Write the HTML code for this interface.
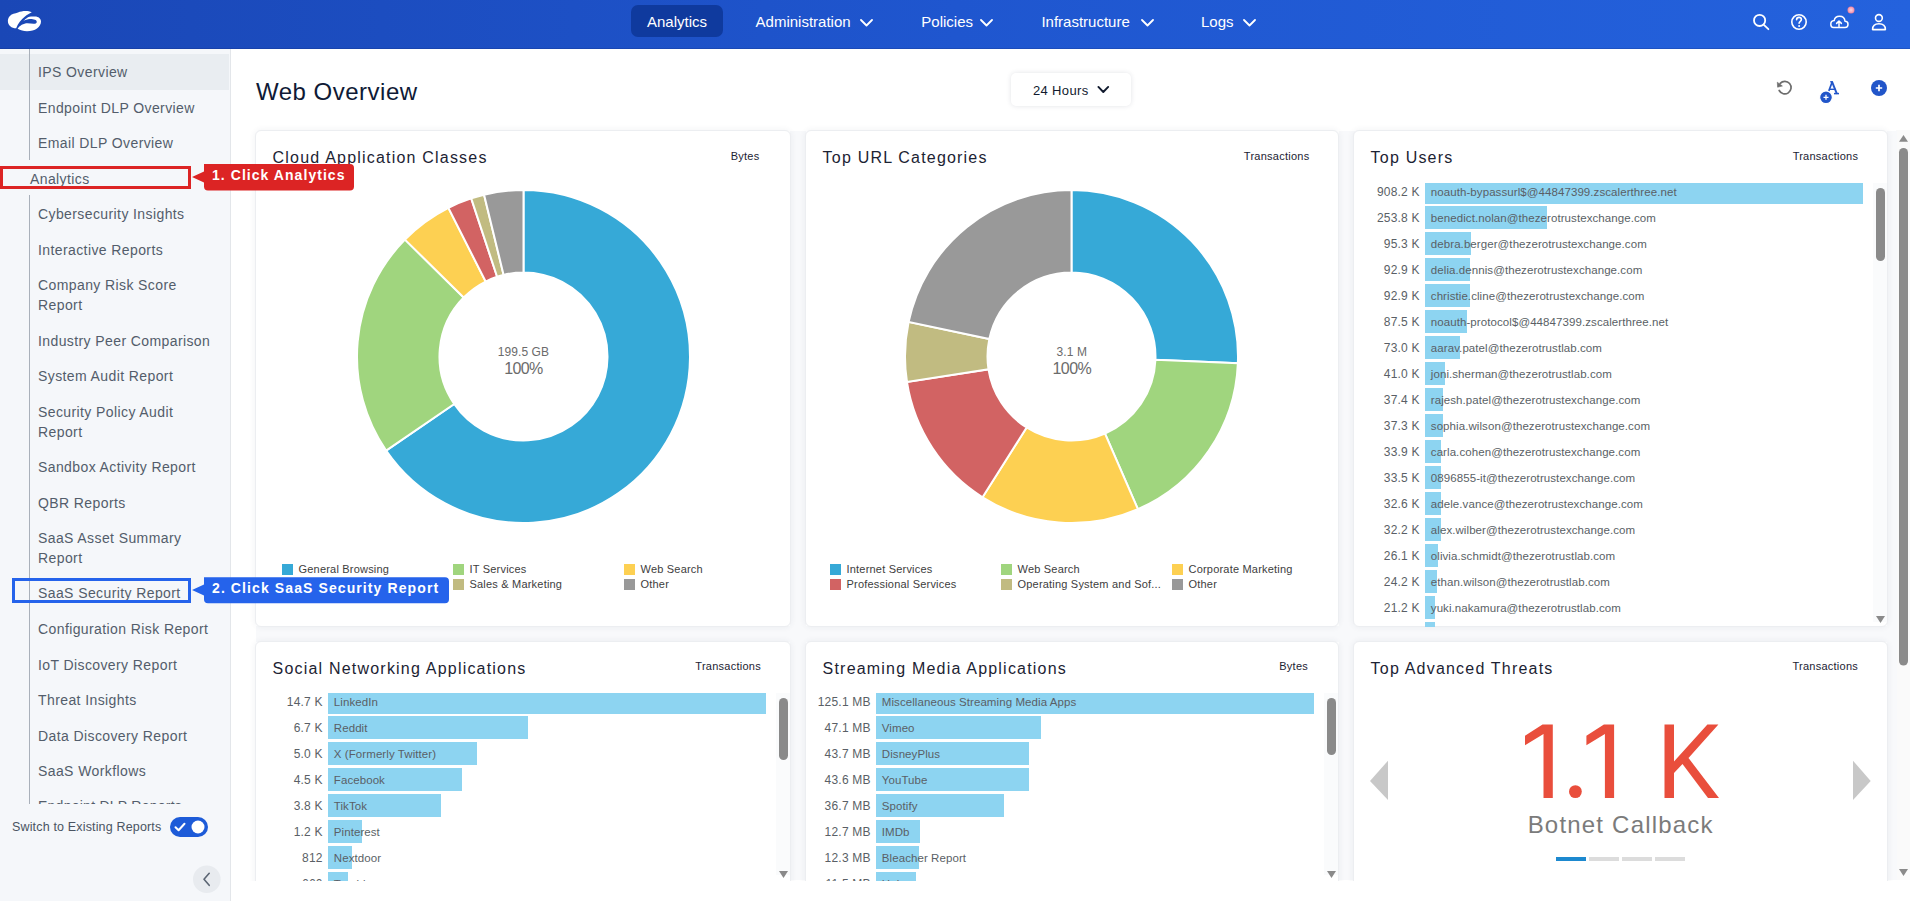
<!DOCTYPE html>
<html><head><meta charset="utf-8"><style>
html,body{margin:0;padding:0;width:1910px;height:901px;overflow:hidden;background:#fff;font-family:"Liberation Sans", sans-serif;}
.t{position:absolute;white-space:nowrap;font-family:"Liberation Sans", sans-serif;}
</style></head><body>
<div style="position:absolute;left:0px;top:0px;width:1910px;height:49px;background:linear-gradient(to right,#1a47b6,#1f56cf 50%,#2462dd);"></div>
<div style="position:absolute;left:0px;top:48px;width:1910px;height:1px;background:rgba(10,30,90,0.18);"></div>
<svg style="position:absolute;left:0px;top:0px" width="50" height="45" viewBox="0 0 50 45">
<path d="M31.8 12.3 C28 10.5 22 10.8 18 12.6 C16.5 13.1 15 13.5 13.5 13.8 C10.2 14.8 7.9 17.8 7.9 21.2 C7.9 25.2 11.5 28.3 16.2 28.3 C18 23.5 21 19.5 25 16.5 C27 15 29.3 13.4 31.8 12.3 Z" fill="#fff"/>
<path d="M17.6 28.8 C20.5 30.5 23.5 31.2 27 31.2 C31 31.2 34.5 30.5 37 28.5 C39.5 26.8 41 24.2 41 21.6 C41 18.5 38.5 16.4 35 16.4 L31 16.4 C28.8 16.6 27 17.6 25.5 19 C24.5 19.8 23.8 20.5 23.3 21.2 C25 20 27.5 19.2 30 19.1 C33.5 19 36.8 20 36.8 21.9 C36.8 23.2 35.2 23.7 33.5 23.7 C31.5 23.7 29.5 23.2 27.5 23.2 C23.5 23.2 19.5 25.5 17.6 28.8 Z" fill="#fff"/>
</svg>
<div style="position:absolute;left:631px;top:5px;width:92px;height:32px;background:#0f3a9e;border-radius:7px;"></div>
<div class="t" style="left:647.00px;top:14.30px;font-size:15px;line-height:15px;color:#fff;letter-spacing:0px;font-weight:400;">Analytics</div>
<div class="t" style="left:755.60px;top:14.30px;font-size:15px;line-height:15px;color:#fff;letter-spacing:0px;font-weight:400;">Administration</div>
<svg style="position:absolute;left:860px;top:19px" width="13" height="8" viewBox="0 0 13 8"><path d="M1 1 L6.5 6.5 L12 1" stroke="#fff" stroke-width="1.8" fill="none" stroke-linecap="round" stroke-linejoin="round"/></svg>
<div class="t" style="left:921.30px;top:14.30px;font-size:15px;line-height:15px;color:#fff;letter-spacing:0px;font-weight:400;">Policies</div>
<svg style="position:absolute;left:980px;top:19px" width="13" height="8" viewBox="0 0 13 8"><path d="M1 1 L6.5 6.5 L12 1" stroke="#fff" stroke-width="1.8" fill="none" stroke-linecap="round" stroke-linejoin="round"/></svg>
<div class="t" style="left:1041.40px;top:14.30px;font-size:15px;line-height:15px;color:#fff;letter-spacing:0px;font-weight:400;">Infrastructure</div>
<svg style="position:absolute;left:1141px;top:19px" width="13" height="8" viewBox="0 0 13 8"><path d="M1 1 L6.5 6.5 L12 1" stroke="#fff" stroke-width="1.8" fill="none" stroke-linecap="round" stroke-linejoin="round"/></svg>
<div class="t" style="left:1201.00px;top:14.30px;font-size:15px;line-height:15px;color:#fff;letter-spacing:0px;font-weight:400;">Logs</div>
<svg style="position:absolute;left:1243px;top:19px" width="13" height="8" viewBox="0 0 13 8"><path d="M1 1 L6.5 6.5 L12 1" stroke="#fff" stroke-width="1.8" fill="none" stroke-linecap="round" stroke-linejoin="round"/></svg>
<svg style="position:absolute;left:1745px;top:5px" width="160" height="34" viewBox="1745 5 160 34">
<circle cx="1759.6" cy="20.4" r="5.6" stroke="#fff" stroke-width="1.8" fill="none"/>
<path d="M1763.6 24.6 L1768.4 29.2" stroke="#fff" stroke-width="1.8" stroke-linecap="round"/>
<circle cx="1799" cy="22" r="7.2" stroke="#fff" stroke-width="1.6" fill="none"/>
<path d="M1796.6 19.8 C1796.6 18.2 1797.7 17.4 1799 17.4 C1800.4 17.4 1801.4 18.3 1801.4 19.6 C1801.4 21.2 1799.1 21.4 1799.1 23.2" stroke="#fff" stroke-width="1.6" fill="none" stroke-linecap="round"/>
<circle cx="1799.1" cy="25.9" r="1" fill="#fff"/>
<path d="M1833.5 27.5 L1845 27.5 C1847 27.5 1848 26 1848 24.2 C1848 22.4 1846.6 21.2 1845 21.2 C1844.8 18.2 1842.5 16.2 1839.5 16.2 C1836.8 16.2 1834.6 18 1834.2 20.6 C1832 20.8 1830.8 22.4 1830.8 24.2 C1830.8 26 1832 27.5 1833.5 27.5 Z" stroke="#fff" stroke-width="1.5" fill="none" stroke-linejoin="round"/>
<path d="M1839 26.5 L1839 21.2 M1836.6 23.4 L1839 21 L1841.4 23.4" stroke="#fff" stroke-width="1.5" fill="none" stroke-linecap="round" stroke-linejoin="round"/>
<defs><radialGradient id="rd"><stop offset="0" stop-color="#fcd3df"/><stop offset="0.6" stop-color="#f6aac0"/><stop offset="1" stop-color="#ee7f9d"/></radialGradient></defs><circle cx="1851" cy="10" r="3.5" fill="url(#rd)"/>
<circle cx="1878.9" cy="18" r="3.4" stroke="#fff" stroke-width="1.6" fill="none"/>
<path d="M1872.6 29.6 C1872.6 26 1875 23.8 1878.9 23.8 C1882.8 23.8 1885.4 26 1885.4 29.6 Z" stroke="#fff" stroke-width="1.6" fill="none" stroke-linejoin="round"/>
</svg>
<div style="position:absolute;left:0px;top:49px;width:230px;height:852px;background:#f5f7fa;"></div>
<div style="position:absolute;left:230px;top:49px;width:1px;height:852px;background:#e3e6ea;"></div>
<div style="position:absolute;left:0px;top:54px;width:229px;height:36px;background:#e9edf1;"></div>
<div style="position:absolute;left:29px;top:49px;width:1px;height:111px;background:#a9b0ba;"></div>
<div style="position:absolute;left:29px;top:195px;width:1px;height:609px;background:#a9b0ba;"></div>
<div class="t" style="left:38.00px;top:65.35px;font-size:14px;line-height:14px;color:#535d6b;letter-spacing:0.4px;font-weight:400;">IPS Overview</div>
<div class="t" style="left:38.00px;top:100.85px;font-size:14px;line-height:14px;color:#535d6b;letter-spacing:0.4px;font-weight:400;">Endpoint DLP Overview</div>
<div class="t" style="left:38.00px;top:136.35px;font-size:14px;line-height:14px;color:#535d6b;letter-spacing:0.4px;font-weight:400;">Email DLP Overview</div>
<div class="t" style="left:38.00px;top:207.35px;font-size:14px;line-height:14px;color:#535d6b;letter-spacing:0.4px;font-weight:400;">Cybersecurity Insights</div>
<div class="t" style="left:38.00px;top:242.85px;font-size:14px;line-height:14px;color:#535d6b;letter-spacing:0.4px;font-weight:400;">Interactive Reports</div>
<div class="t" style="left:38.00px;top:278.35px;font-size:14px;line-height:14px;color:#535d6b;letter-spacing:0.4px;font-weight:400;">Company Risk Score</div>
<div class="t" style="left:38.00px;top:298.35px;font-size:14px;line-height:14px;color:#535d6b;letter-spacing:0.4px;font-weight:400;">Report</div>
<div class="t" style="left:38.00px;top:333.85px;font-size:14px;line-height:14px;color:#535d6b;letter-spacing:0.4px;font-weight:400;">Industry Peer Comparison</div>
<div class="t" style="left:38.00px;top:369.35px;font-size:14px;line-height:14px;color:#535d6b;letter-spacing:0.4px;font-weight:400;">System Audit Report</div>
<div class="t" style="left:38.00px;top:404.85px;font-size:14px;line-height:14px;color:#535d6b;letter-spacing:0.4px;font-weight:400;">Security Policy Audit</div>
<div class="t" style="left:38.00px;top:424.85px;font-size:14px;line-height:14px;color:#535d6b;letter-spacing:0.4px;font-weight:400;">Report</div>
<div class="t" style="left:38.00px;top:460.35px;font-size:14px;line-height:14px;color:#535d6b;letter-spacing:0.4px;font-weight:400;">Sandbox Activity Report</div>
<div class="t" style="left:38.00px;top:495.85px;font-size:14px;line-height:14px;color:#535d6b;letter-spacing:0.4px;font-weight:400;">QBR Reports</div>
<div class="t" style="left:38.00px;top:531.35px;font-size:14px;line-height:14px;color:#535d6b;letter-spacing:0.4px;font-weight:400;">SaaS Asset Summary</div>
<div class="t" style="left:38.00px;top:551.35px;font-size:14px;line-height:14px;color:#535d6b;letter-spacing:0.4px;font-weight:400;">Report</div>
<div class="t" style="left:38.00px;top:585.95px;font-size:14px;line-height:14px;color:#535d6b;letter-spacing:0.4px;font-weight:400;">SaaS Security Report</div>
<div class="t" style="left:38.00px;top:622.35px;font-size:14px;line-height:14px;color:#535d6b;letter-spacing:0.4px;font-weight:400;">Configuration Risk Report</div>
<div class="t" style="left:38.00px;top:657.85px;font-size:14px;line-height:14px;color:#535d6b;letter-spacing:0.4px;font-weight:400;">IoT Discovery Report</div>
<div class="t" style="left:38.00px;top:693.35px;font-size:14px;line-height:14px;color:#535d6b;letter-spacing:0.4px;font-weight:400;">Threat Insights</div>
<div class="t" style="left:38.00px;top:728.85px;font-size:14px;line-height:14px;color:#535d6b;letter-spacing:0.4px;font-weight:400;">Data Discovery Report</div>
<div class="t" style="left:38.00px;top:764.35px;font-size:14px;line-height:14px;color:#535d6b;letter-spacing:0.4px;font-weight:400;">SaaS Workflows</div>
<div class="t" style="left:30.00px;top:171.75px;font-size:14px;line-height:14px;color:#535d6b;letter-spacing:0.4px;font-weight:400;">Analytics</div>
<div style="position:absolute;left:0;top:780px;width:229px;height:24px;overflow:hidden">
<div class="t" style="left:38px;top:19.25px;font-size:14px;line-height:14px;color:#535d6b;letter-spacing:0.25px">Endpoint DLP Reports</div>
</div>
<div class="t" style="left:12.00px;top:820.62px;font-size:12.5px;line-height:12.5px;color:#4a5462;letter-spacing:0.16px;font-weight:400;">Switch to Existing Reports</div>
<div style="position:absolute;left:170px;top:817px;width:38px;height:20px;background:#1d5bd8;border-radius:10px;"></div>
<svg style="position:absolute;left:170px;top:817px" width="38" height="20" viewBox="0 0 38 20"><circle cx="28" cy="10" r="6.5" fill="#fff"/><path d="M5.5 10.2 L8.6 13.2 L14.5 6.8" stroke="#fff" stroke-width="2" fill="none" stroke-linecap="round" stroke-linejoin="round"/></svg>
<svg style="position:absolute;left:192px;top:865px" width="30" height="30" viewBox="0 0 30 30"><circle cx="14.8" cy="14.3" r="13.8" fill="#e8ebef"/><path d="M17.2 8.3 L12 14.3 L17.2 20.3" stroke="#5b6573" stroke-width="1.6" fill="none" stroke-linecap="round" stroke-linejoin="round"/></svg>
<div class="t" style="left:256.00px;top:80.28px;font-size:24px;line-height:24px;color:#0f1a36;letter-spacing:0.5px;font-weight:400;">Web Overview</div>
<div style="position:absolute;left:1010.6px;top:73.4px;width:120.6px;height:32.6px;background:#fff;border-radius:5px;box-shadow:0 0 5px rgba(30,40,70,0.13);"></div>
<div class="t" style="left:1033.00px;top:84.00px;font-size:13px;line-height:13px;color:#111a2e;letter-spacing:0.35px;font-weight:400;">24 Hours</div>
<svg style="position:absolute;left:1097px;top:85px" width="13" height="9" viewBox="0 0 13 9"><path d="M1.4 1.9 L6.3 7 L11.2 1.9" stroke="#111a2e" stroke-width="1.9" fill="none" stroke-linecap="round" stroke-linejoin="round"/></svg>
<svg style="position:absolute;left:1770px;top:74px" width="125" height="34" viewBox="1770 74 125 34">
<path d="M1780.2 83.3 A6.3 6.3 0 1 1 1779.2 90.5" stroke="#6d6d6d" stroke-width="1.7" fill="none" stroke-linecap="round"/>
<path d="M1777.3 82.2 L1777.6 87.2 L1782.4 86 Z" fill="#6d6d6d" stroke="#6d6d6d" stroke-width="0.6" stroke-linejoin="round"/>
<g stroke="#2155c9" fill="none" stroke-linecap="butt">
<path d="M1832.3 81.6 L1827.6 94.2" stroke-width="1.7"/>
<path d="M1832 81.6 L1836.9 93.8" stroke-width="1.9"/>
<path d="M1829.4 89.3 L1835.3 89.3" stroke-width="1.4"/>
<path d="M1834 93.6 L1839 93.6" stroke-width="1.5"/>
<path d="M1830.2 81.8 L1832.8 81.8" stroke-width="1.4"/>
</g>
<circle cx="1826" cy="97.3" r="6.4" fill="#2155c9" stroke="#fff" stroke-width="1.2"/>
<path d="M1826 94.8 L1826 99.8 M1823.5 97.3 L1828.5 97.3" stroke="#fff" stroke-width="1.3"/>
<circle cx="1879" cy="88" r="8" fill="#2155c9"/>
<path d="M1879 84.8 L1879 91.2 M1875.8 88 L1882.2 88" stroke="#fff" stroke-width="1.7"/>
</svg>
<div style="position:absolute;left:1896px;top:130px;width:14px;height:750px;background:#fafafa;"></div>
<svg style="position:absolute;left:1895px;top:130px" width="15" height="750" viewBox="1895 130 15 750"><path d="M1899 141.8 L1903.5 135 L1908 141.8 Z" fill="#8a8a8a"/><rect x="1899" y="148" width="9" height="517.5" rx="4.5" fill="#8a8a8a"/><path d="M1899 869 L1903.5 876 L1908 869 Z" fill="#8a8a8a"/></svg>
<div style="position:absolute;left:790px;top:131px;width:16px;height:749px;background:#f8f9fb;"></div>
<div style="position:absolute;left:1338.5px;top:131px;width:16px;height:749px;background:#f8f9fb;"></div>
<div style="position:absolute;left:1887px;top:131px;width:10px;height:749px;background:#f8f9fb;"></div>
<div style="position:absolute;left:256px;top:626px;width:1640px;height:16px;background:#f8f9fb;"></div>
<div style="position:absolute;left:255.3px;top:130.4px;width:536px;height:496.3px;background:#fff;border:1px solid #eceef1;border-radius:6px;box-sizing:border-box;box-shadow:0 0 6px rgba(40,50,80,0.07)"></div>
<div style="position:absolute;left:804.9px;top:130.4px;width:534.5px;height:496.3px;background:#fff;border:1px solid #eceef1;border-radius:6px;box-sizing:border-box;box-shadow:0 0 6px rgba(40,50,80,0.07)"></div>
<div style="position:absolute;left:1352.9px;top:130.4px;width:535.2px;height:496.3px;background:#fff;border:1px solid #eceef1;border-radius:6px;box-sizing:border-box;box-shadow:0 0 6px rgba(40,50,80,0.07)"></div>
<div style="position:absolute;left:255.3px;top:641px;width:536px;height:300px;background:#fff;border:1px solid #eceef1;border-radius:6px;box-sizing:border-box;box-shadow:0 0 6px rgba(40,50,80,0.07)"></div>
<div style="position:absolute;left:804.9px;top:641px;width:534.5px;height:300px;background:#fff;border:1px solid #eceef1;border-radius:6px;box-sizing:border-box;box-shadow:0 0 6px rgba(40,50,80,0.07)"></div>
<div style="position:absolute;left:1352.9px;top:641px;width:535.2px;height:300px;background:#fff;border:1px solid #eceef1;border-radius:6px;box-sizing:border-box;box-shadow:0 0 6px rgba(40,50,80,0.07)"></div>
<div class="t" style="left:272.60px;top:150.26px;font-size:16px;line-height:16px;color:#1c2333;letter-spacing:1.2px;font-weight:400;">Cloud Application Classes</div>
<div class="t" style="right:1150.60px;top:150.59px;font-size:11px;line-height:11px;color:#1c2333;letter-spacing:0.25px;font-weight:400;">Bytes</div>
<div class="t" style="left:822.60px;top:150.26px;font-size:16px;line-height:16px;color:#1c2333;letter-spacing:1.2px;font-weight:400;">Top URL Categories</div>
<div class="t" style="right:600.60px;top:150.59px;font-size:11px;line-height:11px;color:#1c2333;letter-spacing:0.25px;font-weight:400;">Transactions</div>
<div class="t" style="left:1370.60px;top:150.26px;font-size:16px;line-height:16px;color:#1c2333;letter-spacing:1.2px;font-weight:400;">Top Users</div>
<div class="t" style="right:51.80px;top:150.59px;font-size:11px;line-height:11px;color:#1c2333;letter-spacing:0.25px;font-weight:400;">Transactions</div>
<div class="t" style="left:272.60px;top:660.56px;font-size:16px;line-height:16px;color:#1c2333;letter-spacing:1.2px;font-weight:400;">Social Networking Applications</div>
<div class="t" style="right:1149.10px;top:660.89px;font-size:11px;line-height:11px;color:#1c2333;letter-spacing:0.25px;font-weight:400;">Transactions</div>
<div class="t" style="left:822.60px;top:660.56px;font-size:16px;line-height:16px;color:#1c2333;letter-spacing:1.2px;font-weight:400;">Streaming Media Applications</div>
<div class="t" style="right:602.00px;top:660.89px;font-size:11px;line-height:11px;color:#1c2333;letter-spacing:0.25px;font-weight:400;">Bytes</div>
<div class="t" style="left:1370.60px;top:660.56px;font-size:16px;line-height:16px;color:#1c2333;letter-spacing:1.2px;font-weight:400;">Top Advanced Threats</div>
<div class="t" style="right:52.00px;top:660.89px;font-size:11px;line-height:11px;color:#1c2333;letter-spacing:0.25px;font-weight:400;">Transactions</div>
<svg style="position:absolute;left:354.9px;top:187.89999999999998px" width="337.0" height="337.0" viewBox="354.9 187.89999999999998 337.0 337.0"><path d="M523.40 189.90 A166.5 166.5 0 1 1 386.02 450.47 L454.09 403.86 A84 84 0 1 0 523.40 272.40 Z" fill="#36a9d7" stroke="#fff" stroke-width="2" stroke-linejoin="miter"/><path d="M386.02 450.47 A166.5 166.5 0 0 1 404.85 239.49 L463.59 297.42 A84 84 0 0 0 454.09 403.86 Z" fill="#a0d57e" stroke="#fff" stroke-width="2" stroke-linejoin="miter"/><path d="M404.85 239.49 A166.5 166.5 0 0 1 448.33 207.78 L485.53 281.42 A84 84 0 0 0 463.59 297.42 Z" fill="#fdd052" stroke="#fff" stroke-width="2" stroke-linejoin="miter"/><path d="M448.33 207.78 A166.5 166.5 0 0 1 471.12 198.32 L497.02 276.65 A84 84 0 0 0 485.53 281.42 Z" fill="#d26363" stroke="#fff" stroke-width="2" stroke-linejoin="miter"/><path d="M471.12 198.32 A166.5 166.5 0 0 1 483.97 194.64 L503.51 274.79 A84 84 0 0 0 497.02 276.65 Z" fill="#c1bb81" stroke="#fff" stroke-width="2" stroke-linejoin="miter"/><path d="M483.97 194.64 A166.5 166.5 0 0 1 523.40 189.90 L523.40 272.40 A84 84 0 0 0 503.51 274.79 Z" fill="#999999" stroke="#fff" stroke-width="2" stroke-linejoin="miter"/></svg>
<svg style="position:absolute;left:903.3px;top:187.89999999999998px" width="337.0" height="337.0" viewBox="903.3 187.89999999999998 337.0 337.0"><path d="M1071.80 189.90 A166.5 166.5 0 0 1 1238.17 363.08 L1155.73 359.77 A84 84 0 0 0 1071.80 272.40 Z" fill="#36a9d7" stroke="#fff" stroke-width="2" stroke-linejoin="miter"/><path d="M1238.17 363.08 A166.5 166.5 0 0 1 1138.19 509.09 L1105.29 433.43 A84 84 0 0 0 1155.73 359.77 Z" fill="#a0d57e" stroke="#fff" stroke-width="2" stroke-linejoin="miter"/><path d="M1138.19 509.09 A166.5 166.5 0 0 1 982.83 497.14 L1026.91 427.40 A84 84 0 0 0 1105.29 433.43 Z" fill="#fdd052" stroke="#fff" stroke-width="2" stroke-linejoin="miter"/><path d="M982.83 497.14 A166.5 166.5 0 0 1 907.26 381.87 L988.79 369.25 A84 84 0 0 0 1026.91 427.40 Z" fill="#d26363" stroke="#fff" stroke-width="2" stroke-linejoin="miter"/><path d="M907.26 381.87 A166.5 166.5 0 0 1 908.94 321.78 L989.64 338.94 A84 84 0 0 0 988.79 369.25 Z" fill="#c1bb81" stroke="#fff" stroke-width="2" stroke-linejoin="miter"/><path d="M908.94 321.78 A166.5 166.5 0 0 1 1071.80 189.90 L1071.80 272.40 A84 84 0 0 0 989.64 338.94 Z" fill="#999999" stroke="#fff" stroke-width="2" stroke-linejoin="miter"/></svg>
<div class="t" style="left:23.40px;width:1000px;text-align:center;top:345.64px;font-size:12px;line-height:12px;color:#6b6b6b;letter-spacing:0.1px;font-weight:400;">199.5 GB</div>
<div class="t" style="left:23.40px;width:1000px;text-align:center;top:361.06px;font-size:16px;line-height:16px;color:#6b6b6b;letter-spacing:-0.6px;font-weight:400;">100%</div>
<div class="t" style="left:571.80px;width:1000px;text-align:center;top:345.64px;font-size:12px;line-height:12px;color:#6b6b6b;letter-spacing:0.1px;font-weight:400;">3.1 M</div>
<div class="t" style="left:571.80px;width:1000px;text-align:center;top:361.06px;font-size:16px;line-height:16px;color:#6b6b6b;letter-spacing:-0.6px;font-weight:400;">100%</div>
<div style="position:absolute;left:282px;top:564px;width:11px;height:10.5px;background:#36a9d7;"></div>
<div class="t" style="left:298.50px;top:563.69px;font-size:11px;line-height:11px;color:#3d3d3d;letter-spacing:0.2px;font-weight:400;">General Browsing</div>
<div style="position:absolute;left:453px;top:564px;width:11px;height:10.5px;background:#a0d57e;"></div>
<div class="t" style="left:469.50px;top:563.69px;font-size:11px;line-height:11px;color:#3d3d3d;letter-spacing:0.2px;font-weight:400;">IT Services</div>
<div style="position:absolute;left:624px;top:564px;width:11px;height:10.5px;background:#fdd052;"></div>
<div class="t" style="left:640.50px;top:563.69px;font-size:11px;line-height:11px;color:#3d3d3d;letter-spacing:0.2px;font-weight:400;">Web Search</div>
<div style="position:absolute;left:453px;top:579px;width:11px;height:10.5px;background:#c1bb81;"></div>
<div class="t" style="left:469.50px;top:578.69px;font-size:11px;line-height:11px;color:#3d3d3d;letter-spacing:0.2px;font-weight:400;">Sales &amp; Marketing</div>
<div style="position:absolute;left:624px;top:579px;width:11px;height:10.5px;background:#999999;"></div>
<div class="t" style="left:640.50px;top:578.69px;font-size:11px;line-height:11px;color:#3d3d3d;letter-spacing:0.2px;font-weight:400;">Other</div>
<div style="position:absolute;left:830px;top:564px;width:11px;height:10.5px;background:#36a9d7;"></div>
<div class="t" style="left:846.50px;top:563.69px;font-size:11px;line-height:11px;color:#3d3d3d;letter-spacing:0.2px;font-weight:400;">Internet Services</div>
<div style="position:absolute;left:1001px;top:564px;width:11px;height:10.5px;background:#a0d57e;"></div>
<div class="t" style="left:1017.50px;top:563.69px;font-size:11px;line-height:11px;color:#3d3d3d;letter-spacing:0.2px;font-weight:400;">Web Search</div>
<div style="position:absolute;left:1172px;top:564px;width:11px;height:10.5px;background:#fdd052;"></div>
<div class="t" style="left:1188.50px;top:563.69px;font-size:11px;line-height:11px;color:#3d3d3d;letter-spacing:0.2px;font-weight:400;">Corporate Marketing</div>
<div style="position:absolute;left:830px;top:579px;width:11px;height:10.5px;background:#d26363;"></div>
<div class="t" style="left:846.50px;top:578.69px;font-size:11px;line-height:11px;color:#3d3d3d;letter-spacing:0.2px;font-weight:400;">Professional Services</div>
<div style="position:absolute;left:1001px;top:579px;width:11px;height:10.5px;background:#c1bb81;"></div>
<div class="t" style="left:1017.50px;top:578.69px;font-size:11px;line-height:11px;color:#3d3d3d;letter-spacing:0.2px;font-weight:400;">Operating System and Sof...</div>
<div style="position:absolute;left:1172px;top:579px;width:11px;height:10.5px;background:#999999;"></div>
<div class="t" style="left:1188.50px;top:578.69px;font-size:11px;line-height:11px;color:#3d3d3d;letter-spacing:0.2px;font-weight:400;">Other</div>
<div style="position:absolute;left:1354px;top:183.3px;width:533px;height:443.7px;overflow:hidden">
<div style="position:absolute;left:71px;top:-2.80px;width:438.00px;height:23px;background:#8dd4f1"></div>
<div class="t" style="right:467.30px;top:2.94px;font-size:12px;line-height:12px;color:#5a5f66;letter-spacing:0.2px">908.2 K</div>
<div class="t" style="left:76.80px;top:3.57px;font-size:11.5px;line-height:11.5px;color:#5a5f66;letter-spacing:0.08px">noauth-bypassurl$@44847399.zscalerthree.net</div>
<div style="position:absolute;left:71px;top:23.20px;width:122.40px;height:23px;background:#8dd4f1"></div>
<div class="t" style="right:467.30px;top:28.94px;font-size:12px;line-height:12px;color:#5a5f66;letter-spacing:0.2px">253.8 K</div>
<div class="t" style="left:76.80px;top:29.57px;font-size:11.5px;line-height:11.5px;color:#5a5f66;letter-spacing:0.08px">benedict.nolan@thezerotrustexchange.com</div>
<div style="position:absolute;left:71px;top:49.20px;width:45.96px;height:23px;background:#8dd4f1"></div>
<div class="t" style="right:467.30px;top:54.94px;font-size:12px;line-height:12px;color:#5a5f66;letter-spacing:0.2px">95.3 K</div>
<div class="t" style="left:76.80px;top:55.57px;font-size:11.5px;line-height:11.5px;color:#5a5f66;letter-spacing:0.08px">debra.berger@thezerotrustexchange.com</div>
<div style="position:absolute;left:71px;top:75.20px;width:44.80px;height:23px;background:#8dd4f1"></div>
<div class="t" style="right:467.30px;top:80.94px;font-size:12px;line-height:12px;color:#5a5f66;letter-spacing:0.2px">92.9 K</div>
<div class="t" style="left:76.80px;top:81.57px;font-size:11.5px;line-height:11.5px;color:#5a5f66;letter-spacing:0.08px">delia.dennis@thezerotrustexchange.com</div>
<div style="position:absolute;left:71px;top:101.20px;width:44.80px;height:23px;background:#8dd4f1"></div>
<div class="t" style="right:467.30px;top:106.94px;font-size:12px;line-height:12px;color:#5a5f66;letter-spacing:0.2px">92.9 K</div>
<div class="t" style="left:76.80px;top:107.57px;font-size:11.5px;line-height:11.5px;color:#5a5f66;letter-spacing:0.08px">christie.cline@thezerotrustexchange.com</div>
<div style="position:absolute;left:71px;top:127.20px;width:42.20px;height:23px;background:#8dd4f1"></div>
<div class="t" style="right:467.30px;top:132.94px;font-size:12px;line-height:12px;color:#5a5f66;letter-spacing:0.2px">87.5 K</div>
<div class="t" style="left:76.80px;top:133.57px;font-size:11.5px;line-height:11.5px;color:#5a5f66;letter-spacing:0.08px">noauth-protocol$@44847399.zscalerthree.net</div>
<div style="position:absolute;left:71px;top:153.20px;width:35.21px;height:23px;background:#8dd4f1"></div>
<div class="t" style="right:467.30px;top:158.94px;font-size:12px;line-height:12px;color:#5a5f66;letter-spacing:0.2px">73.0 K</div>
<div class="t" style="left:76.80px;top:159.57px;font-size:11.5px;line-height:11.5px;color:#5a5f66;letter-spacing:0.08px">aarav.patel@thezerotrustlab.com</div>
<div style="position:absolute;left:71px;top:179.20px;width:19.77px;height:23px;background:#8dd4f1"></div>
<div class="t" style="right:467.30px;top:184.94px;font-size:12px;line-height:12px;color:#5a5f66;letter-spacing:0.2px">41.0 K</div>
<div class="t" style="left:76.80px;top:185.57px;font-size:11.5px;line-height:11.5px;color:#5a5f66;letter-spacing:0.08px">joni.sherman@thezerotrustlab.com</div>
<div style="position:absolute;left:71px;top:205.20px;width:18.04px;height:23px;background:#8dd4f1"></div>
<div class="t" style="right:467.30px;top:210.94px;font-size:12px;line-height:12px;color:#5a5f66;letter-spacing:0.2px">37.4 K</div>
<div class="t" style="left:76.80px;top:211.57px;font-size:11.5px;line-height:11.5px;color:#5a5f66;letter-spacing:0.08px">rajesh.patel@thezerotrustexchange.com</div>
<div style="position:absolute;left:71px;top:231.20px;width:17.99px;height:23px;background:#8dd4f1"></div>
<div class="t" style="right:467.30px;top:236.94px;font-size:12px;line-height:12px;color:#5a5f66;letter-spacing:0.2px">37.3 K</div>
<div class="t" style="left:76.80px;top:237.57px;font-size:11.5px;line-height:11.5px;color:#5a5f66;letter-spacing:0.08px">sophia.wilson@thezerotrustexchange.com</div>
<div style="position:absolute;left:71px;top:257.20px;width:16.35px;height:23px;background:#8dd4f1"></div>
<div class="t" style="right:467.30px;top:262.94px;font-size:12px;line-height:12px;color:#5a5f66;letter-spacing:0.2px">33.9 K</div>
<div class="t" style="left:76.80px;top:263.57px;font-size:11.5px;line-height:11.5px;color:#5a5f66;letter-spacing:0.08px">carla.cohen@thezerotrustexchange.com</div>
<div style="position:absolute;left:71px;top:283.20px;width:16.16px;height:23px;background:#8dd4f1"></div>
<div class="t" style="right:467.30px;top:288.94px;font-size:12px;line-height:12px;color:#5a5f66;letter-spacing:0.2px">33.5 K</div>
<div class="t" style="left:76.80px;top:289.57px;font-size:11.5px;line-height:11.5px;color:#5a5f66;letter-spacing:0.08px">0896855-it@thezerotrustexchange.com</div>
<div style="position:absolute;left:71px;top:309.20px;width:15.72px;height:23px;background:#8dd4f1"></div>
<div class="t" style="right:467.30px;top:314.94px;font-size:12px;line-height:12px;color:#5a5f66;letter-spacing:0.2px">32.6 K</div>
<div class="t" style="left:76.80px;top:315.57px;font-size:11.5px;line-height:11.5px;color:#5a5f66;letter-spacing:0.08px">adele.vance@thezerotrustexchange.com</div>
<div style="position:absolute;left:71px;top:335.20px;width:15.53px;height:23px;background:#8dd4f1"></div>
<div class="t" style="right:467.30px;top:340.94px;font-size:12px;line-height:12px;color:#5a5f66;letter-spacing:0.2px">32.2 K</div>
<div class="t" style="left:76.80px;top:341.57px;font-size:11.5px;line-height:11.5px;color:#5a5f66;letter-spacing:0.08px">alex.wilber@thezerotrustexchange.com</div>
<div style="position:absolute;left:71px;top:361.20px;width:12.59px;height:23px;background:#8dd4f1"></div>
<div class="t" style="right:467.30px;top:366.94px;font-size:12px;line-height:12px;color:#5a5f66;letter-spacing:0.2px">26.1 K</div>
<div class="t" style="left:76.80px;top:367.57px;font-size:11.5px;line-height:11.5px;color:#5a5f66;letter-spacing:0.08px">olivia.schmidt@thezerotrustlab.com</div>
<div style="position:absolute;left:71px;top:387.20px;width:11.67px;height:23px;background:#8dd4f1"></div>
<div class="t" style="right:467.30px;top:392.94px;font-size:12px;line-height:12px;color:#5a5f66;letter-spacing:0.2px">24.2 K</div>
<div class="t" style="left:76.80px;top:393.57px;font-size:11.5px;line-height:11.5px;color:#5a5f66;letter-spacing:0.08px">ethan.wilson@thezerotrustlab.com</div>
<div style="position:absolute;left:71px;top:413.20px;width:10.22px;height:23px;background:#8dd4f1"></div>
<div class="t" style="right:467.30px;top:418.94px;font-size:12px;line-height:12px;color:#5a5f66;letter-spacing:0.2px">21.2 K</div>
<div class="t" style="left:76.80px;top:419.57px;font-size:11.5px;line-height:11.5px;color:#5a5f66;letter-spacing:0.08px">yuki.nakamura@thezerotrustlab.com</div>
<div style="position:absolute;left:71px;top:439.20px;width:9.89px;height:23px;background:#8dd4f1"></div>
<div class="t" style="right:467.30px;top:444.94px;font-size:12px;line-height:12px;color:#5a5f66;letter-spacing:0.2px">20.5 K</div>
<div class="t" style="left:76.80px;top:445.57px;font-size:11.5px;line-height:11.5px;color:#5a5f66;letter-spacing:0.08px">megan.bowen@thezerotrustlab.com</div>
</div>
<div style="position:absolute;left:256px;top:693.2px;width:533px;height:187.79999999999995px;overflow:hidden">
<div style="position:absolute;left:72px;top:-2.70px;width:438.00px;height:23px;background:#8dd4f1"></div>
<div class="t" style="right:466.30px;top:3.04px;font-size:12px;line-height:12px;color:#5a5f66;letter-spacing:0.2px">14.7 K</div>
<div class="t" style="left:77.80px;top:3.67px;font-size:11.5px;line-height:11.5px;color:#5a5f66;letter-spacing:0.08px">LinkedIn</div>
<div style="position:absolute;left:72px;top:23.30px;width:199.63px;height:23px;background:#8dd4f1"></div>
<div class="t" style="right:466.30px;top:29.04px;font-size:12px;line-height:12px;color:#5a5f66;letter-spacing:0.2px">6.7 K</div>
<div class="t" style="left:77.80px;top:29.67px;font-size:11.5px;line-height:11.5px;color:#5a5f66;letter-spacing:0.08px">Reddit</div>
<div style="position:absolute;left:72px;top:49.30px;width:148.98px;height:23px;background:#8dd4f1"></div>
<div class="t" style="right:466.30px;top:55.04px;font-size:12px;line-height:12px;color:#5a5f66;letter-spacing:0.2px">5.0 K</div>
<div class="t" style="left:77.80px;top:55.67px;font-size:11.5px;line-height:11.5px;color:#5a5f66;letter-spacing:0.08px">X (Formerly Twitter)</div>
<div style="position:absolute;left:72px;top:75.30px;width:134.08px;height:23px;background:#8dd4f1"></div>
<div class="t" style="right:466.30px;top:81.04px;font-size:12px;line-height:12px;color:#5a5f66;letter-spacing:0.2px">4.5 K</div>
<div class="t" style="left:77.80px;top:81.67px;font-size:11.5px;line-height:11.5px;color:#5a5f66;letter-spacing:0.08px">Facebook</div>
<div style="position:absolute;left:72px;top:101.30px;width:113.22px;height:23px;background:#8dd4f1"></div>
<div class="t" style="right:466.30px;top:107.04px;font-size:12px;line-height:12px;color:#5a5f66;letter-spacing:0.2px">3.8 K</div>
<div class="t" style="left:77.80px;top:107.67px;font-size:11.5px;line-height:11.5px;color:#5a5f66;letter-spacing:0.08px">TikTok</div>
<div style="position:absolute;left:72px;top:127.30px;width:34.27px;height:23px;background:#8dd4f1"></div>
<div class="t" style="right:466.30px;top:133.04px;font-size:12px;line-height:12px;color:#5a5f66;letter-spacing:0.2px">1.2 K</div>
<div class="t" style="left:77.80px;top:133.67px;font-size:11.5px;line-height:11.5px;color:#5a5f66;letter-spacing:0.08px">Pinterest</div>
<div style="position:absolute;left:72px;top:153.30px;width:24.19px;height:23px;background:#8dd4f1"></div>
<div class="t" style="right:466.30px;top:159.04px;font-size:12px;line-height:12px;color:#5a5f66;letter-spacing:0.2px">812</div>
<div class="t" style="left:77.80px;top:159.67px;font-size:11.5px;line-height:11.5px;color:#5a5f66;letter-spacing:0.08px">Nextdoor</div>
<div style="position:absolute;left:72px;top:179.30px;width:19.67px;height:23px;background:#8dd4f1"></div>
<div class="t" style="right:466.30px;top:185.04px;font-size:12px;line-height:12px;color:#5a5f66;letter-spacing:0.2px">660</div>
<div class="t" style="left:77.80px;top:185.67px;font-size:11.5px;line-height:11.5px;color:#5a5f66;letter-spacing:0.08px">Tumblr</div>
</div>
<div style="position:absolute;left:806px;top:693.2px;width:533px;height:187.79999999999995px;overflow:hidden">
<div style="position:absolute;left:70px;top:-2.70px;width:438.00px;height:23px;background:#8dd4f1"></div>
<div class="t" style="right:468.30px;top:3.04px;font-size:12px;line-height:12px;color:#5a5f66;letter-spacing:0.2px">125.1 MB</div>
<div class="t" style="left:75.80px;top:3.67px;font-size:11.5px;line-height:11.5px;color:#5a5f66;letter-spacing:0.08px">Miscellaneous Streaming Media Apps</div>
<div style="position:absolute;left:70px;top:23.30px;width:164.91px;height:23px;background:#8dd4f1"></div>
<div class="t" style="right:468.30px;top:29.04px;font-size:12px;line-height:12px;color:#5a5f66;letter-spacing:0.2px">47.1 MB</div>
<div class="t" style="left:75.80px;top:29.67px;font-size:11.5px;line-height:11.5px;color:#5a5f66;letter-spacing:0.08px">Vimeo</div>
<div style="position:absolute;left:70px;top:49.30px;width:153.00px;height:23px;background:#8dd4f1"></div>
<div class="t" style="right:468.30px;top:55.04px;font-size:12px;line-height:12px;color:#5a5f66;letter-spacing:0.2px">43.7 MB</div>
<div class="t" style="left:75.80px;top:55.67px;font-size:11.5px;line-height:11.5px;color:#5a5f66;letter-spacing:0.08px">DisneyPlus</div>
<div style="position:absolute;left:70px;top:75.30px;width:152.65px;height:23px;background:#8dd4f1"></div>
<div class="t" style="right:468.30px;top:81.04px;font-size:12px;line-height:12px;color:#5a5f66;letter-spacing:0.2px">43.6 MB</div>
<div class="t" style="left:75.80px;top:81.67px;font-size:11.5px;line-height:11.5px;color:#5a5f66;letter-spacing:0.08px">YouTube</div>
<div style="position:absolute;left:70px;top:101.30px;width:128.49px;height:23px;background:#8dd4f1"></div>
<div class="t" style="right:468.30px;top:107.04px;font-size:12px;line-height:12px;color:#5a5f66;letter-spacing:0.2px">36.7 MB</div>
<div class="t" style="left:75.80px;top:107.67px;font-size:11.5px;line-height:11.5px;color:#5a5f66;letter-spacing:0.08px">Spotify</div>
<div style="position:absolute;left:70px;top:127.30px;width:44.47px;height:23px;background:#8dd4f1"></div>
<div class="t" style="right:468.30px;top:133.04px;font-size:12px;line-height:12px;color:#5a5f66;letter-spacing:0.2px">12.7 MB</div>
<div class="t" style="left:75.80px;top:133.67px;font-size:11.5px;line-height:11.5px;color:#5a5f66;letter-spacing:0.08px">IMDb</div>
<div style="position:absolute;left:70px;top:153.30px;width:43.06px;height:23px;background:#8dd4f1"></div>
<div class="t" style="right:468.30px;top:159.04px;font-size:12px;line-height:12px;color:#5a5f66;letter-spacing:0.2px">12.3 MB</div>
<div class="t" style="left:75.80px;top:159.67px;font-size:11.5px;line-height:11.5px;color:#5a5f66;letter-spacing:0.08px">Bleacher Report</div>
<div style="position:absolute;left:70px;top:179.30px;width:40.26px;height:23px;background:#8dd4f1"></div>
<div class="t" style="right:468.30px;top:185.04px;font-size:12px;line-height:12px;color:#5a5f66;letter-spacing:0.2px">11.5 MB</div>
<div class="t" style="left:75.80px;top:185.67px;font-size:11.5px;line-height:11.5px;color:#5a5f66;letter-spacing:0.08px">Hulu</div>
</div>
<div style="position:absolute;left:1873px;top:183px;width:14px;height:439px;background:#fafbfc;"></div>
<div style="position:absolute;left:1876px;top:188px;width:9px;height:73px;border-radius:4.5px;background:#8a8a8a"></div>
<svg style="position:absolute;left:1876px;top:616px" width="9" height="8" viewBox="0 0 9 8"><path d="M0 0 L9 0 L4.5 7 Z" fill="#8a8a8a"/></svg>
<div style="position:absolute;left:776px;top:693px;width:14px;height:182px;background:#fafbfc;"></div>
<div style="position:absolute;left:779px;top:698px;width:9px;height:62px;border-radius:4.5px;background:#8a8a8a"></div>
<svg style="position:absolute;left:779px;top:870.5px" width="9" height="8" viewBox="0 0 9 8"><path d="M0 0 L9 0 L4.5 7 Z" fill="#8a8a8a"/></svg>
<div style="position:absolute;left:1324px;top:693px;width:14px;height:182px;background:#fafbfc;"></div>
<div style="position:absolute;left:1327px;top:698px;width:9px;height:57px;border-radius:4.5px;background:#8a8a8a"></div>
<svg style="position:absolute;left:1327px;top:870.5px" width="9" height="8" viewBox="0 0 9 8"><path d="M0 0 L9 0 L4.5 7 Z" fill="#8a8a8a"/></svg>
<svg style="position:absolute;left:1520px;top:720px" width="205" height="82" viewBox="1520 720 205 82"><g fill="#e94e3c"><path d="M1552.8 724.5 L1552.8 797.9 L1543.5 797.9 L1543.5 734 L1525 745.2 L1525 735.8 L1542.5 724.5 Z"/><circle cx="1575.4" cy="791.6" r="6.4"/><path d="M1614.1 724.5 L1614.1 797.9 L1604.9 797.9 L1604.9 734 L1586.4 745.2 L1586.4 735.8 L1603.9 724.5 Z"/><path d="M1664.5 724.5 L1674 724.5 L1674 761.5 L1707.4 724.5 L1718.4 724.5 L1688.5 758 L1719 797.9 L1708 797.9 L1682.5 764 L1674 773 L1674 797.9 L1664.5 797.9 Z"/></g></svg>
<div class="t" style="left:1120.70px;width:1000px;text-align:center;top:813.08px;font-size:24px;line-height:24px;color:#7b7b7b;letter-spacing:1.2px;font-weight:400;">Botnet Callback</div>
<div style="position:absolute;left:1556px;top:857px;width:30px;height:3.8px;background:#1d89cf;"></div>
<div style="position:absolute;left:1589px;top:857px;width:30px;height:3.8px;background:#dcdcdc;"></div>
<div style="position:absolute;left:1622px;top:857px;width:30px;height:3.8px;background:#dcdcdc;"></div>
<div style="position:absolute;left:1655px;top:857px;width:30px;height:3.8px;background:#dcdcdc;"></div>
<svg style="position:absolute;left:1365px;top:755px" width="510" height="50" viewBox="1365 755 510 50"><path d="M1370 781 L1388 760.7 L1388 800 Z" fill="#c8c8c8"/><path d="M1853 760.7 L1870.7 781 L1853 800 Z" fill="#c8c8c8"/></svg>
<div style="position:absolute;left:231px;top:881px;width:1679px;height:20px;background:#fff;"></div>
<div style="position:absolute;left:0px;top:166px;width:191px;height:23px;border:3px solid #dc2424;box-sizing:border-box;"></div>
<svg style="position:absolute;left:190px;top:164px" width="170" height="28" viewBox="190 164 170 28"><path d="M204 164 L350 164 Q354 164 354 168 L354 186.5 Q354 190.5 350 190.5 L208 190.5 Q204 190.5 204 186.5 L204 182.5 L192 177 L204 171.5 Z" fill="#dc2424"/></svg>
<div class="t" style="left:212.00px;top:167.95px;font-size:14px;line-height:14px;color:#fff;letter-spacing:1.05px;font-weight:700;">1. Click Analytics</div>
<div style="position:absolute;left:12px;top:578px;width:179px;height:25px;border:3px solid #2563eb;box-sizing:border-box;"></div>
<svg style="position:absolute;left:190px;top:576px" width="262" height="30" viewBox="190 576 262 30"><path d="M204 577.2 L445 577.2 Q449 577.2 449 581.2 L449 599.2 Q449 603.2 445 603.2 L208 603.2 Q204 603.2 204 599.2 L204 595.5 L192 590 L204 584.5 Z" fill="#2563eb"/></svg>
<div class="t" style="left:212.00px;top:581.05px;font-size:14px;line-height:14px;color:#fff;letter-spacing:1.1px;font-weight:700;">2. Click SaaS Security Report</div>
</body></html>
